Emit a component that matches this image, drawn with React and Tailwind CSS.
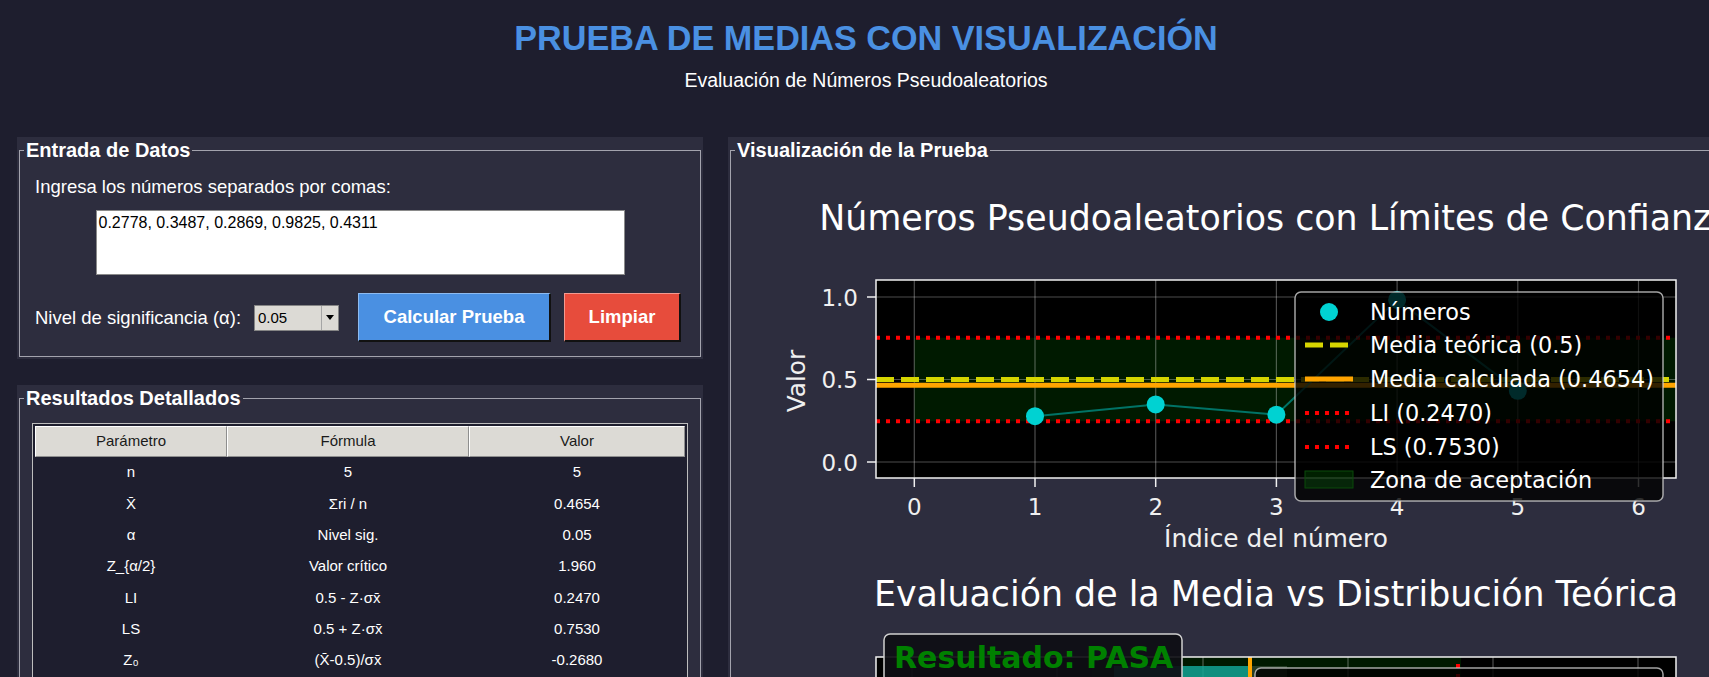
import React from 'react';

const filas = [
  ['n', '5', '5'],
  ['X\u0304', 'Σri / n', '0.4654'],
  ['α', 'Nivel sig.', '0.05'],
  ['Z_{α/2}', 'Valor crítico', '1.960'],
  ['LI', '0.5 - Z·σx\u0304', '0.2470'],
  ['LS', '0.5 + Z·σx\u0304', '0.7530'],
  ['Z₀', '(X\u0304-0.5)/σx\u0304', '-0.2680'],
];

const anchos = ['w-[192px]', 'w-[242px]', 'w-[216px]'];

const numeros = [0.2778, 0.3487, 0.2869, 0.9825, 0.4311];

// escala del primer gráfico (coordenadas de página)
const xAt = (v) => 914.3 + v * 120.7;
const yAt = (v) => 462 - v * 165;

const Grupo = ({ titulo, className, children }) => (
  <div className={`shrink-0 bg-[#2d2d3e] p-[2px] ${className}`}>
    <fieldset className="h-full min-w-0 border border-[#a3a3ad]">
      <legend className="ml-[4px] px-[2px] text-[20px] leading-[22px] font-bold text-white">{titulo}</legend>
      {children}
    </fieldset>
  </div>
);

const Grafico = () => {
  const legend = [
    { y: 312, txt: 'Números' },
    { y: 345, txt: 'Media teórica (0.5)' },
    { y: 379, txt: 'Media calculada (0.4654)' },
    { y: 413, txt: 'LI (0.2470)' },
    { y: 447, txt: 'LS (0.7530)' },
    { y: 480, txt: 'Zona de aceptación' },
  ];
  const puntos = numeros.map((v, i) => [xAt(i + 1), yAt(v)]);

  return (
    <svg width="1000" height="520" viewBox="731 161 1000 520" className="block" style={{ fontFamily: '"DejaVu Sans", sans-serif' }}>
      {/* titulo 1 */}
      <text x="1276" y="230" textAnchor="middle" fontSize="34.8" fill="#ffffff">
        Números Pseudoaleatorios con Límites de Confianza
      </text>

      {/* ejes 1 */}
      <rect x="876" y="280" width="800" height="198" fill="#000" />
      <rect x={xAt(0)} y={yAt(0.753)} width={1676 - xAt(0)} height={yAt(0.247) - yAt(0.753)} fill="#008000" fillOpacity="0.2" />
      {[0, 1, 2, 3, 4, 5, 6].map((i) => (
        <line key={'gx' + i} x1={xAt(i)} x2={xAt(i)} y1="280" y2="478" stroke="#fff" strokeOpacity="0.3" strokeWidth="1.2" />
      ))}
      {[0, 0.5, 1].map((v) => (
        <line key={'gy' + v} x1="876" x2="1676" y1={yAt(v)} y2={yAt(v)} stroke="#fff" strokeOpacity="0.3" strokeWidth="1.2" />
      ))}
      <line x1="876" x2="1676" y1={yAt(0.753)} y2={yAt(0.753)} stroke="#ff0000" strokeWidth="4" strokeDasharray="4 6" />
      <line x1="876" x2="1676" y1={yAt(0.247)} y2={yAt(0.247)} stroke="#ff0000" strokeWidth="4" strokeDasharray="4 6" />
      <line x1="876" x2="1676" y1={yAt(0.5)} y2={yAt(0.5)} stroke="#d6d600" strokeWidth="5" strokeDasharray="18 7" />
      <line x1="876" x2="1676" y1={yAt(0.4654)} y2={yAt(0.4654)} stroke="#ffa500" strokeWidth="5" />
      <polyline points={puntos.map((p) => p.join(',')).join(' ')} fill="none" stroke="#00cccc" strokeOpacity="0.5" strokeWidth="2" />
      {puntos.map(([x, y], i) => (
        <circle key={'p' + i} cx={x} cy={y} r="9" fill="#00d2d2" />
      ))}
      <rect x="876" y="280" width="800" height="198" fill="none" stroke="#f0f0f0" strokeWidth="1.5" />

      {/* ticks */}
      {[0, 0.5, 1].map((v) => (
        <g key={'ty' + v}>
          <line x1="867" x2="876" y1={yAt(v)} y2={yAt(v)} stroke="#f0f0f0" strokeWidth="1.5" />
          <text x="858" y={yAt(v) + 8.5} textAnchor="end" fontSize="23" fill="#f0f0f0">{v.toFixed(1)}</text>
        </g>
      ))}
      {[0, 1, 2, 3, 4, 5, 6].map((i) => (
        <g key={'tx' + i}>
          <line x1={xAt(i)} x2={xAt(i)} y1="478" y2="487" stroke="#f0f0f0" strokeWidth="1.5" />
          <text x={xAt(i)} y="515" textAnchor="middle" fontSize="23" fill="#f0f0f0">{i}</text>
        </g>
      ))}
      <text transform="translate(805 381) rotate(-90)" textAnchor="middle" fontSize="24.8" fill="#f0f0f0">Valor</text>
      <text x="1276" y="547" textAnchor="middle" fontSize="24.8" fill="#f0f0f0">Índice del número</text>

      {/* leyenda 1 */}
      <rect x="1295" y="292" width="368" height="209" rx="6" fill="#000" fillOpacity="0.8" stroke="#cccccc" strokeOpacity="0.8" strokeWidth="1.5" />
      <circle cx="1329" cy={legend[0].y} r="9" fill="#00d2d2" />
      <line x1="1305" x2="1353" y1={legend[1].y} y2={legend[1].y} stroke="#d6d600" strokeWidth="5" strokeDasharray="18 7" />
      <line x1="1305" x2="1353" y1={legend[2].y} y2={legend[2].y} stroke="#ffa500" strokeWidth="5" />
      <line x1="1305" x2="1353" y1={legend[3].y} y2={legend[3].y} stroke="#ff0000" strokeWidth="4" strokeDasharray="4 6" />
      <line x1="1305" x2="1353" y1={legend[4].y} y2={legend[4].y} stroke="#ff0000" strokeWidth="4" strokeDasharray="4 6" />
      <rect x="1305" y={legend[5].y - 9} width="48" height="17" fill="#008000" fillOpacity="0.25" stroke="#0a4a0a" strokeWidth="1" />
      {legend.map((l) => (
        <text key={l.txt} x="1370" y={l.y + 8} fontSize="22.4" fill="#ffffff">{l.txt}</text>
      ))}

      {/* titulo 2 */}
      <text x="1276" y="606" textAnchor="middle" fontSize="34.8" fill="#ffffff">
        Evaluación de la Media vs Distribución Teórica
      </text>

      {/* ejes 2 */}
      <rect x="876" y="657" width="800" height="40" fill="#000" />
      <rect x="1092" y="657" width="369" height="40" fill="#008000" fillOpacity="0.2" />
      {[912, 1057, 1203, 1348, 1493, 1638].map((x) => (
        <line key={'g2' + x} x1={x} x2={x} y1="657" y2="697" stroke="#fff" strokeOpacity="0.3" strokeWidth="1.2" />
      ))}
      <rect x="1114" y="666" width="136" height="30" fill="#12a594" fillOpacity="0.85" />
      <rect x="1250" y="666" width="37" height="30" fill="#ffffff" fillOpacity="0.15" />
      <line x1="1458" x2="1458" y1="664" y2="697" stroke="#ff0000" strokeWidth="4" strokeDasharray="4 6" />
      <line x1="1250" x2="1250" y1="657" y2="697" stroke="#ffa500" strokeWidth="4" />
      <rect x="876" y="657" width="800" height="60" fill="none" stroke="#f0f0f0" strokeWidth="1.5" />
      <rect x="1255" y="668" width="408" height="60" rx="6" fill="#000" fillOpacity="0.8" stroke="#cccccc" strokeOpacity="0.8" strokeWidth="1.5" />

      <rect x="884" y="634" width="298" height="70" rx="6" fill="#0e0e14" fillOpacity="0.92" stroke="#cfcfcf" strokeWidth="1.5" />
      <text x="894" y="668" fontSize="30" fontWeight="bold" fill="#008000">Resultado: PASA</text>
    </svg>
  );
};

const App = () => {
  return (
    <div className="h-screen w-full overflow-hidden bg-[#1e1e2e] font-['Liberation_Sans',Arial,sans-serif] text-white">
      <header className="flex flex-col items-center pl-[23px] pt-[19px]">
        <h1 className="text-[34.2px] leading-[38px] font-bold text-[#4a90e2]">PRUEBA DE MEDIAS CON VISUALIZACIÓN</h1>
        <p className="mt-[11px] text-[19.5px] leading-[24px] text-white">Evaluación de Números Pseudoaleatorios</p>
      </header>

      <main className="mt-[45px] flex gap-[25px] pl-[17px]">
        <div className="flex w-[686px] shrink-0 flex-col gap-[26px]">
          <Grupo titulo="Entrada de Datos" className="h-[222px]">
            <p className="mt-[15px] pl-[15px] text-[18.5px] leading-[21px]">Ingresa los números separados por comas:</p>
            <textarea
              readOnly
              defaultValue="0.2778, 0.3487, 0.2869, 0.9825, 0.4311"
              className="mx-auto mt-[13px] block h-[65px] w-[529px] resize-none border border-[#8a8a8a] bg-white px-[2px] py-[2px] text-[16px] leading-[19px] text-black outline-none"
            />
            <div className="mt-[18px] flex items-center pl-[15px]">
              <span className="w-[219px] text-[18.5px] leading-[21px]">Nivel de significancia (α):</span>
              <div className="flex h-[26px] w-[85px] border border-[#858585] bg-[#dcdad5]">
                <span className="flex-1 pl-[3px] text-[15px] leading-[24px] text-black">0.05</span>
                <span className="flex w-[17px] items-center justify-center border-l border-[#a5a5a5]">
                  <svg width="8" height="5" viewBox="0 0 8 5">
                    <path d="M0 0 L8 0 L4 5 Z" fill="#000" />
                  </svg>
                </span>
              </div>
              <button className="ml-[19px] h-[49px] w-[193px] border-t border-l border-b-2 border-r-2 border-t-[#8dbbf0] border-l-[#8dbbf0] border-b-[#111] border-r-[#111] bg-[#4a90e2] text-[18.5px] font-bold text-white">
                Calcular Prueba
              </button>
              <button className="ml-[13px] h-[49px] w-[117px] border-t border-l border-b-2 border-r-2 border-t-[#f29a90] border-l-[#f29a90] border-b-[#111] border-r-[#111] bg-[#e74c3c] text-[18.5px] font-bold text-white">
                Limpiar
              </button>
            </div>
          </Grupo>

          <Grupo titulo="Resultados Detallados" className="h-[400px]">
            <div className="mx-[12px] mt-[14px] border border-[#bdbdbd] bg-[#1e1e2e] p-[2px]">
              <div className="flex h-[31px]">
                {['Parámetro', 'Fórmula', 'Valor'].map((h, i) => (
                  <div
                    key={h}
                    className={`${anchos[i]} flex items-center justify-center border border-t-white border-l-white border-b-[#8e8e8e] border-r-[#8e8e8e] bg-[#dcdad5] text-[15px] text-[#1a1a1a]`}
                  >
                    {h}
                  </div>
                ))}
              </div>
              {filas.map((fila) => (
                <div key={fila[0]} className="flex h-[31.33px]">
                  {fila.map((c, i) => (
                    <div key={i} className={`${anchos[i]} flex items-center justify-center text-[15px] text-white`}>
                      {c}
                    </div>
                  ))}
                </div>
              ))}
            </div>
          </Grupo>
        </div>

        <Grupo titulo="Visualización de la Prueba" className="h-[600px] w-[1020px]">
          <Grafico />
        </Grupo>
      </main>
    </div>
  );
};

export default App;
